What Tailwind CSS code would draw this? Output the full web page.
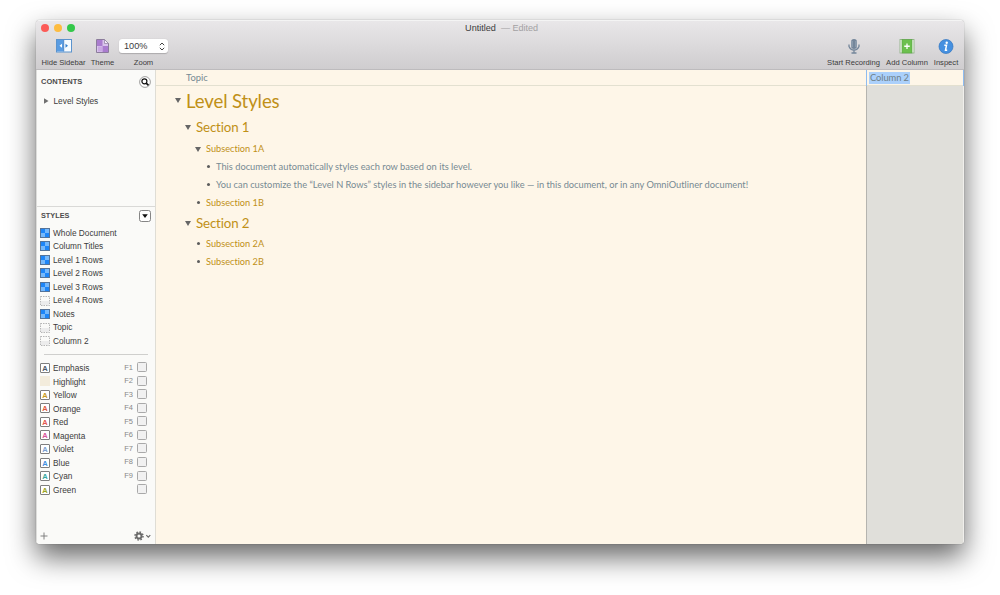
<!DOCTYPE html>
<html lang="en">
    <head>
        <meta charset="UTF-8" />
        <meta name="viewport" content="width=device-width, initial-scale=1.0" />
        <title>Untitled</title>
        <script src="https://cdn.jsdelivr.net/npm/@tailwindcss/browser@4"></script>
    </head>
    <body class="bg-white h-[595px] overflow-hidden pt-5 pl-9 font-['Liberation_Sans',sans-serif] text-[#3c3c3c]">
        <div class="flex flex-col w-[928px] h-[524px] rounded-[4px] overflow-hidden shadow-[0_0_1px_rgba(0,0,0,0.5),0_13px_28px_rgba(0,0,0,0.6)]">
            <header class="shrink-0 h-[50px] bg-linear-to-b from-[#e9e7e9] to-[#cfcdcf] border-t border-b border-t-[#f4f4f4] border-b-[#bdbbbd]">
                <div class="grid grid-cols-[1fr_auto_1fr] items-center h-[14px]">
                    <div class="flex gap-[5px] pl-[5px]">
                        <span class="size-2 rounded-full bg-[#fc5b57]"></span>
                        <span class="size-2 rounded-full bg-[#fdbc40]"></span>
                        <span class="size-2 rounded-full bg-[#34c84a]"></span>
                    </div>
                    <div class="text-[9.1px] leading-[14px] whitespace-pre pl-[3px]">Untitled <span class="text-[#a3a1a3] tracking-[-0.050px]"> — Edited</span></div>
                </div>
                <div class="flex justify-between pl-[5px] pr-[6px] pt-[3px] text-[7.6px] leading-[9px] whitespace-nowrap">
                    <div class="flex">
                        <div class="flex flex-col items-center w-[45px]">
                            <svg class="h-[16px] w-4" viewBox="0 0 16 16">
                                <rect x=".5" y="1.5" width="15" height="12.5" fill="#f7fbff" stroke="#5b93cd" />
                                <rect x="1" y="2" width="6.5" height="11.5" fill="#5a9ce2" />
                                <path d="M7.7 2v11.5" stroke="#4a86c8" />
                                <path d="M6 5.7v4L3.5 7.7z" fill="#fff" />
                                <path d="M9.5 5.7v4L12 7.7z" fill="#3580d0" />
                            </svg>
                            <span class="pt-[4px]">Hide Sidebar</span>
                        </div>
                        <div class="flex flex-col items-center w-[23px] ml-[5px]">
                            <svg class="h-[16px] w-[13px]" viewBox="0 0 13 16">
                                <path d="M.5 1.5h8l4 4v9H.5z" fill="#d9c4ec" stroke="#8c7c9c" />
                                <path d="M1 2h5.5v6H1zM6.5 8H12v6H6.5z" fill="#aa7ccf" />
                                <path d="M2 8.5h4v5H2z" fill="#c9a8e3" />
                                <path d="M8.5 1.5v4h4z" fill="#f6effb" stroke="#8c7c9c" stroke-width=".7" />
                            </svg>
                            <span class="pt-[4px]">Theme</span>
                        </div>
                        <div class="flex flex-col items-center w-[49px] ml-[5px]">
                            <div class="flex items-center justify-between w-[49px] h-[14px] mt-[1px] mb-[1px] rounded-[3px] bg-white pl-[5px] pr-[3px] text-[9.2px] shadow-[0_0.5px_1px_rgba(0,0,0,0.2)]">
                                100%
                                <svg class="w-[6px] h-[9px]" viewBox="0 0 6 9" fill="none" stroke="#444" stroke-width="1">
                                    <path d="M.8 3.2L3 1l2.200 2.200M.8 5.800L3 8l2.200-2.200" />
                                </svg>
                            </div>
                            <span class="pt-[4px]">Zoom</span>
                        </div>
                    </div>
                    <div class="flex gap-[6px]">
                        <div class="flex flex-col items-center w-[53px]">
                            <svg class="w-3 h-4" viewBox="0 0 12 16">
                                <rect x="3" y="1" width="6" height="10" rx="3" fill="#74869a" />
                                <path d="M3 4h2M3 6h2M3 8h2M7 4h2M7 6h2M7 8h2" stroke="#b6c0cb" stroke-width=".7" />
                                <path d="M1 6.500v2Q2.500 12 6 12T11 8.500v-2M6 12v3M3.500 15h5" fill="none" stroke="#74869a" stroke-width="1.300" />
                            </svg>
                            <span class="pt-[4px]">Start Recording</span>
                        </div>
                        <div class="flex flex-col items-center w-[42px]">
                            <svg class="w-4 h-4" viewBox="0 0 16 16">
                                <rect x="1" y="1.500" width="14" height="13.500" fill="#eef7ea" stroke="#8bb080" stroke-width=".8" />
                                <rect x="3" y="1.500" width="10" height="13.500" fill="#6cc04e" stroke="#5ba046" stroke-width=".6" />
                                <path d="M8 5.500v5.500M5.250 8.250h5.500" stroke="#fff" stroke-width="1.300" />
                            </svg>
                            <span class="pt-[4px]">Add Column</span>
                        </div>
                        <div class="flex flex-col items-center w-[24px]">
                            <svg class="w-4 h-4" viewBox="0 0 16 16">
                                <circle cx="8" cy="8.500" r="7" fill="#4690e0" stroke="#3577c0" stroke-width=".7" />
                                <circle cx="8.700" cy="4.800" r="1.200" fill="#fff" />
                                <path d="M6.300 7.300h2.200L7.500 12.300h1.700" fill="none" stroke="#fff" stroke-width="1.500" />
                            </svg>
                            <span class="pt-[4px]">Inspect</span>
                        </div>
                    </div>
                </div>
            </header>

            <div class="flex flex-1 min-h-0">
                <aside class="flex flex-col shrink-0 w-[120px] bg-[#fafaf8] border-l border-l-[#dcdcda] border-r border-r-[#dfddd5] text-[8.3px]">
                    <section class="h-[137px] border-b border-b-[#d9d9d7]">
                        <div class="flex items-center justify-between pl-1 pr-[4px] h-[23px]">
                            <h2 class="text-[7.5px] font-bold text-[#4c4c4c]">CONTENTS</h2>
                            <svg class="size-[12px]" viewBox="0 0 12 12" fill="none">
                                <circle cx="6" cy="6" r="5.400" fill="#fff" stroke="#888" stroke-width=".8" />
                                <circle cx="5.400" cy="5.300" r="2.500" stroke="#111" stroke-width="1.200" />
                                <path d="M7.200 7.100l2.300 2.300" stroke="#111" stroke-width="1.600" />
                            </svg>
                        </div>
                        <div class="flex items-center h-4 pl-[7px]">
                            <svg class="w-[4.500px] h-[6px] mr-[5px]" viewBox="0 0 5 6"><path d="M0 0l5 3-5 3z" fill="#707070" /></svg>
                            Level Styles
                        </div>
                    </section>
                    <section class="flex-1">
                        <div class="flex items-center justify-between pl-1 pr-[4px] h-[18px]">
                            <h2 class="text-[7.3px] font-bold text-[#4c4c4c]">STYLES</h2>
                            <svg class="size-[12px]" viewBox="0 0 12 12">
                                <rect x=".5" y=".5" width="11" height="11" rx="2" fill="#fff" stroke="#777" stroke-width=".9" />
                                <path d="M3.200 4.300h5.600L6 8z" fill="#111" />
                            </svg>
                        </div>
                        <ul id="levels" class="pt-[1px]"></ul>
                        <hr class="border-[#cfcfcd] mx-[7px] mt-[6px] mb-[6px]" />
                        <ul id="named"></ul>
                    </section>
                    <footer class="flex items-center justify-between h-[17px] pl-[3px] pr-[4px]">
                        <svg class="size-[8px]" viewBox="0 0 8 8"><path d="M4 .5v7M.5 4h7" stroke="#777" stroke-width=".9" /></svg>
                        <svg class="w-[17px] h-[10px]" viewBox="0 0 17 10" fill="none" stroke="#6a6a6a">
                            <circle cx="5" cy="5" r="2.500" stroke-width="1.900" />
                            <circle cx="5" cy="5" r="4" stroke-width="1.500" stroke-dasharray="1.570 1.570" />
                            <path d="M12.300 4.200l2 2 2-2" stroke-width="1.200" />
                        </svg>
                    </footer>
                </aside>

                <main class="flex flex-col w-[710px] bg-[#fef6e8] font-['Lato',sans-serif] [font-variant-ligatures:none] text-[#778a93]">
                    <div class="h-4 border-b border-b-[#e3e0d0] pl-[30px] text-[9.4px] leading-[15px]">Topic</div>
                    <div class="pt-[3px] text-[#c09017]">
                        <div class="flex items-center h-[26px] pl-[19px] text-[18.600px] tracking-[-0.120px]">
                            <svg class="w-[6px] h-[5px] mr-[5px] mb-[4px]" viewBox="0 0 6 5"><path d="M0 0h6L3 5z" fill="#666" /></svg>
                            Level Styles
                        </div>
                        <div class="flex items-center h-[26px] pl-[29px] text-[13.300px] tracking-[-0.150px]">
                            <svg class="w-[6px] h-[5px] mr-[5px] mb-[2px]" viewBox="0 0 6 5"><path d="M0 0h6L3 5z" fill="#666" /></svg>
                            Section 1
                        </div>
                        <div class="flex items-center h-[17px] pl-[39px] pb-px text-[9.200px]">
                            <svg class="w-[6px] h-[5px] mr-[5px]" viewBox="0 0 6 5"><path d="M0 0h6L3 5z" fill="#666" /></svg>
                            Subsection 1A
                        </div>
                        <div class="flex items-center h-[18px] pl-[51px] text-[9.290px] text-[#778a93] whitespace-nowrap">
                            <span class="size-[3px] rounded-full bg-[#5c5c5c] mr-[6px] mb-px"></span>
                            This document automatically styles each row based on its level.
                        </div>
                        <div class="flex items-center h-[18px] pl-[51px] text-[9.290px] text-[#778a93] whitespace-nowrap">
                            <span class="size-[3px] rounded-full bg-[#5c5c5c] mr-[6px] mb-px"></span>
                            You can customize the “Level N Rows” styles in the sidebar however you like — in this document, or in any OmniOutliner document!
                        </div>
                        <div class="flex items-center h-[18px] pl-[41px] text-[9.200px]">
                            <span class="size-[3px] rounded-full bg-[#5c5c5c] mr-[6px] mb-px"></span>
                            Subsection 1B
                        </div>
                        <div class="flex items-center h-[23px] pl-[29px] text-[13.300px] tracking-[-0.150px]">
                            <svg class="w-[6px] h-[5px] mr-[5px] mb-[1px]" viewBox="0 0 6 5"><path d="M0 0h6L3 5z" fill="#666" /></svg>
                            Section 2
                        </div>
                        <div class="flex items-center h-[18px] pl-[41px] text-[9.200px]">
                            <span class="size-[3px] rounded-full bg-[#5c5c5c] mr-[6px] mb-px"></span>
                            Subsection 2A
                        </div>
                        <div class="flex items-center h-[18px] pl-[41px] text-[9.200px]">
                            <span class="size-[3px] rounded-full bg-[#5c5c5c] mr-[6px] mb-px"></span>
                            Subsection 2B
                        </div>
                    </div>
                </main>

                <div class="flex flex-1 bg-[#e0dfda] font-['Lato',sans-serif]">
                    <div class="flex flex-col w-px">
                        <div class="h-4 bg-[#8fbcf0]"></div>
                        <div class="flex-1 bg-[#b5b4af]"></div>
                    </div>
                    <div class="flex-1">
                        <div class="flex items-center h-4 bg-[#fef6e8] border-b border-b-[#e3e0d0] pl-[2px]">
                            <span class="bg-[#abd0fb] text-[#6f8088] text-[9.400px] leading-[12px] px-[1px] tracking-[-0.100px]">Column 2</span>
                        </div>
                    </div>
                    <div class="flex flex-col w-px">
                        <div class="h-4 bg-[#8fbcf0]"></div>
                        <div class="flex-1 bg-[#f0efec]"></div>
                    </div>
                </div>
            </div>
        </div>

        <script>
            const levels = [
                ['Whole Document', true],
                ['Column Titles', true],
                ['Level 1 Rows', true],
                ['Level 2 Rows', true],
                ['Level 3 Rows', true],
                ['Level 4 Rows', false],
                ['Notes', true],
                ['Topic', false],
                ['Column 2', false]
            ]
            const named = [
                ['Emphasis', '#4c5a68'],
                ['Highlight', ''],
                ['Yellow', '#c79a1c'],
                ['Orange', '#dd5a3c'],
                ['Red', '#e2574c'],
                ['Magenta', '#d9559a'],
                ['Violet', '#7b9fd0'],
                ['Blue', '#3f8fe0'],
                ['Cyan', '#35a8a0'],
                ['Green', '#9aa520']
            ]

            const filled = `<svg class="size-[10px]" viewBox="0 0 10 10">
                <rect x=".5" y=".5" width="9" height="9" fill="#1e86f8" stroke="#55749a" />
                <path d="M5 1h4v4H5zM1 5h4v4H1z" fill="#77b9fb" /></svg>`
            const empty = `<svg class="size-[10px]" viewBox="0 0 10 10">
                <path d="M1 5h8v4H1z" fill="#ececec" />
                <rect x=".5" y=".5" width="9" height="9" fill="none" stroke="#a5a5a5" stroke-width=".8" stroke-dasharray="1.500 1" /></svg>`
            const swatch = '<span class="size-[10px] bg-[#f3ecdc]"></span>'
            const letter = (color) => `<svg class="size-[10px]" viewBox="0 0 10 10">
                <rect x=".5" y=".5" width="9" height="9" rx=".5" fill="#fff" stroke="#707070" stroke-width=".9" />
                <text x="5" y="7.700" text-anchor="middle" font-size="7.500" font-weight="bold" fill="${color}">A</text></svg>`

            document.getElementById('levels').innerHTML = levels
                .map(
                    ([name, on]) =>
                        `<li class="flex items-center gap-[3px] h-[13.550px] pl-[3px]">${on ? filled : empty}<span>${name}</span></li>`
                )
                .join('')

            document.getElementById('named').innerHTML = named
                .map(
                    ([name, color], i) => `<li class="flex items-center gap-[3px] h-[13.550px] pl-[3px] pr-[8px]">
                        ${color ? letter(color) : swatch}
                        <span class="flex-1 pt-px">${name}</span>
                        <span class="text-[7.500px] text-[#888] pr-[1px] pb-px">${i < 9 ? 'F' + (i + 1) : ''}</span>
                        <span class="size-[10px] rounded-[1.500px] border border-[#a9a9a9] bg-[#f1f1f1] mb-px"></span>
                    </li>`
                )
                .join('')
        </script>
    </body>
</html>
